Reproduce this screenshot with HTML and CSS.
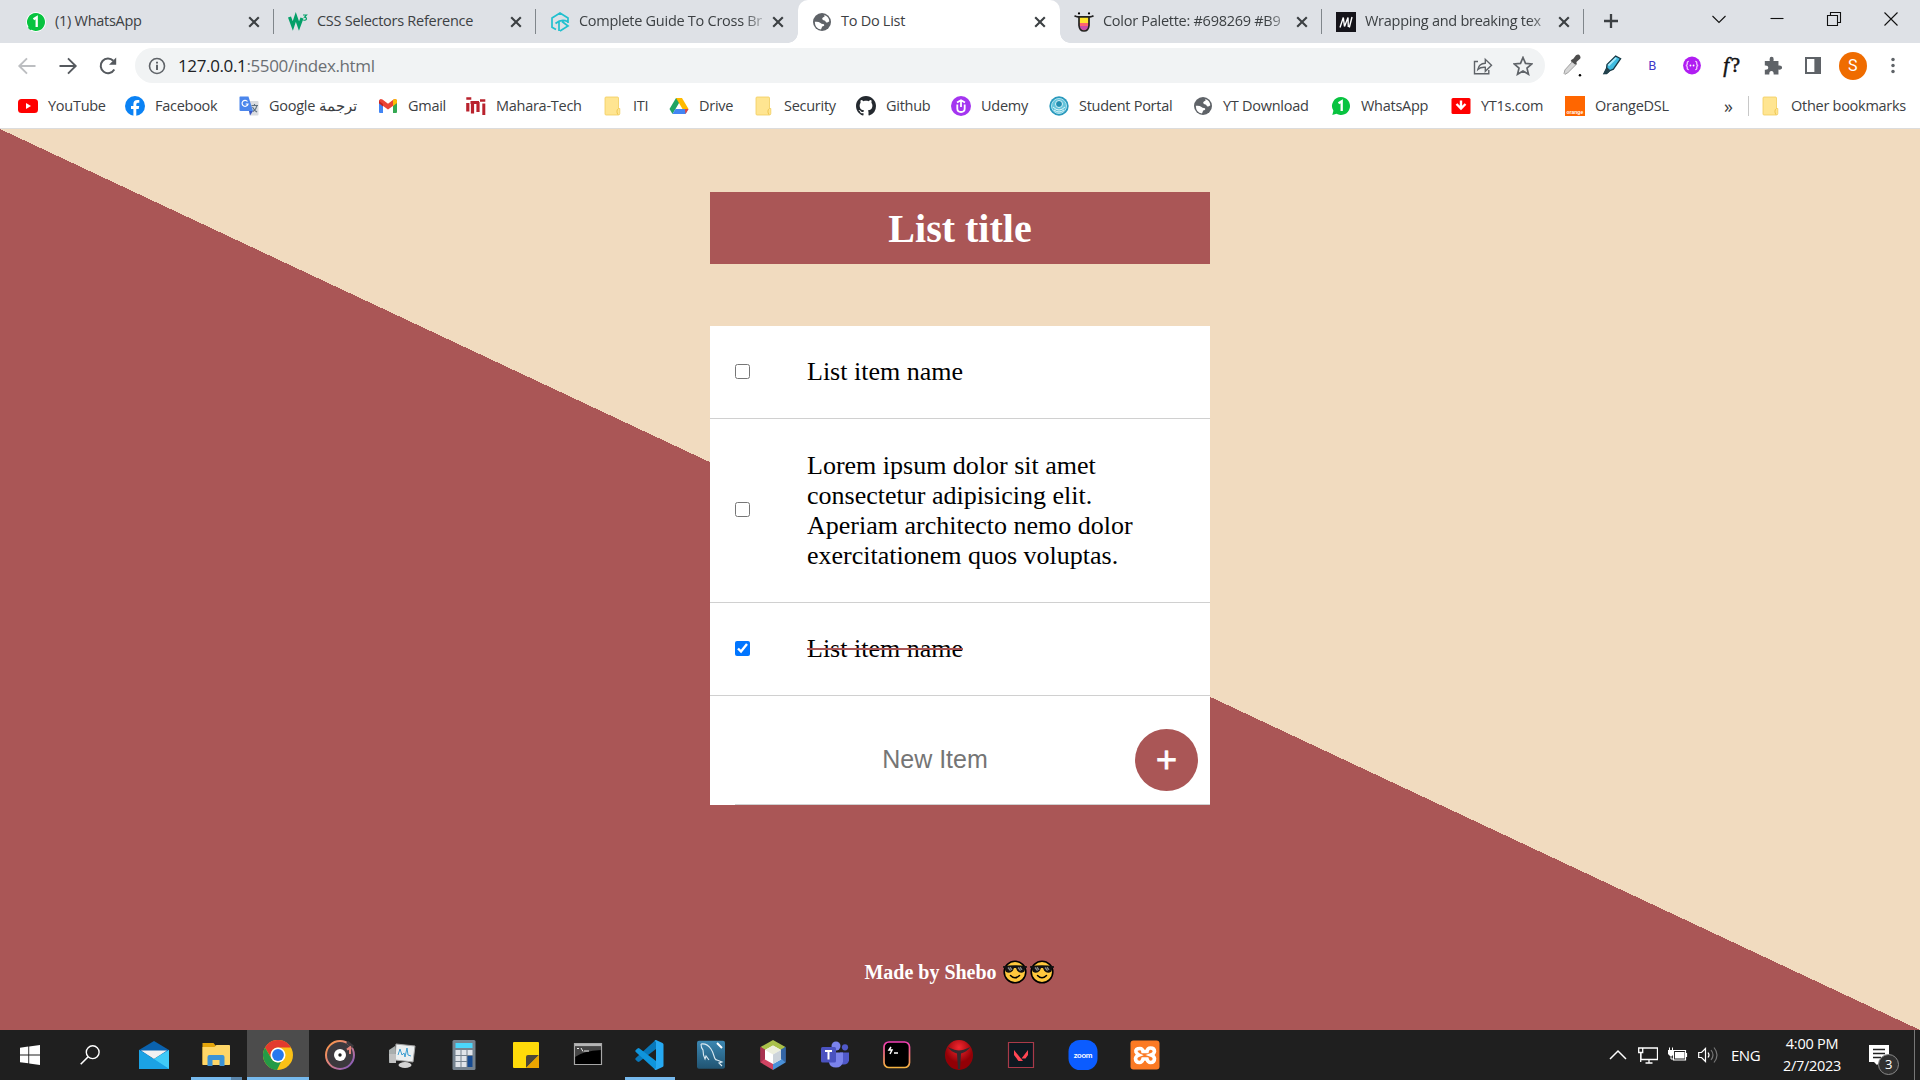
FILE: index.html
```html
<!DOCTYPE html>
<html lang="en">
<head>
<meta charset="utf-8">
<title>To Do List</title>
<link rel="stylesheet" href="styles.css">
</head>
<body>
<svg class="defs" width="0" height="0">
  <defs>
    <symbol id="x" viewBox="0 0 12 12"><path d="M1.2 1.2l9.6 9.6M10.8 1.2l-9.6 9.6" stroke="#3c4043" stroke-width="2.1" fill="none"/></symbol>
    <symbol id="globe" viewBox="0 0 20 20"><circle cx="10" cy="10" r="9" fill="#5f6368"/><path d="M2.800 9.800q3.500-.6 5.700 1.200 1 1.200 3 1 1.500.8.300 2l-1.600.4-1.200 3.200Q3 17 2.800 9.800z" fill="#fff"/><path d="M12.300 3q4.500 1.500 5 6.300-1.300 1.700-3.300.9-.6-1.800-2.500-1.900-1.500-.3-1.300-2 1-1.300 2.300-1.500z" fill="#fff"/></symbol>
    <symbol id="wa" viewBox="0 0 20 20"><path d="M10 1a9 9 0 1 1-4.500 16.800L1.300 19l1.100-4.200A9 9 0 0 1 10 1z" fill="#08c340"/><path d="M7.500 7.200l3.200-2V15" stroke="#fff" stroke-width="2.300" fill="none"/></symbol>
    <symbol id="folder" viewBox="0 0 20 20"><path d="M3 1h11.500a1 1 0 0 1 1 1v10.500h1.300v5a1.500 1.500 0 0 1-1.500 1.500H3a1 1 0 0 1-1-1V2a1 1 0 0 1 1-1z" fill="#ffe591" stroke="#f1cd5d" stroke-width=".8"/><path d="M15.500 12.500c-2 1-2 4-.5 6.200" fill="none" stroke="#efc650"/></symbol>
    <symbol id="cool" viewBox="0 0 24 24"><circle cx="12" cy="12" r="10.800" fill="#ffc83d" stroke="#000" stroke-width="1.600"/><path d="M0 6.200q12-2 24 0v1.500h-1.500l-1.300 4q-4 2.300-7-1l-1.200-2.700h-2l-1.200 2.700q-3 3.300-7 1l-1.300-4H0z" fill="#111"/><path d="M5 7.500l2.500 3.200M7 7.200l2 2.700M15 7.500l2.500 3.200M17 7.200l2 2.700" stroke="#8b8b8b" stroke-width="1.300"/><path d="M7.500 15.500q4.500 4.500 9 0" fill="none" stroke="#000" stroke-width="1.500" stroke-linecap="round"/></symbol>
  </defs>
</svg>

<header class="browser">
  <div class="tabstrip">
    <div class="tab"><svg class="fav halo"><use href="#wa"/></svg><span class="tab-title">(1) WhatsApp</span><svg class="close"><use href="#x"/></svg></div>
    <div class="tab"><svg class="fav" viewBox="0 0 20 20"><path d="M1.500 5l3.300 9 3-9 3.200 9 3-8" fill="none" stroke="#04a069" stroke-width="3.200"/><path d="M15 3h3.500l-2 2.200q2.500.3 1.800 2.200-.8 1.300-3 .6" fill="none" stroke="#04a069" stroke-width="1.200"/></svg><span class="tab-title">CSS Selectors Reference</span><svg class="close"><use href="#x"/></svg></div>
    <div class="tab no-sep"><svg class="fav" viewBox="0 0 20 20"><path d="M6 17.500l-4-2.300V6L10 1l8 5v5M10 19l8-5-6-4.500M5.500 11.500q6-5 12-2M9 9v10" fill="none" stroke="#22c0cf" stroke-width="1.700"/></svg><span class="tab-title fade">Complete Guide To Cross Br</span><svg class="close"><use href="#x"/></svg></div>
    <div class="tab active"><svg class="fav"><use href="#globe"/></svg><span class="tab-title">To Do List</span><svg class="close"><use href="#x"/></svg></div>
    <div class="tab"><svg class="fav" viewBox="0 0 20 20"><path d="M5 5h10v9q-1 5-5 5t-5-5z" fill="#ffe52d"/><path d="M5 11h10v3H5z" fill="#ff646e"/><path d="M5.300 14h9.400q-1 4.500-4.700 4.500T5.300 14z" fill="#c94fa8"/><path d="M.5 3.800q2 1.200 4 1h11q2 .2 4-1M5 5v8.500q.5 5.500 5 5.500t5-5.500V5" fill="none" stroke="#222" stroke-width="1.700"/><circle cx="5" cy="1.400" r="1.100"/><circle cx="15" cy="1.400" r="1.100"/></svg><span class="tab-title fade">Color Palette: #698269 #B9</span><svg class="close"><use href="#x"/></svg></div>
    <div class="tab"><svg class="fav" viewBox="0 0 20 20"><path d="M0 0h20v20H0z" fill="#15141a"/><path d="M4 15.500L7.300 5.500 8.500 14.500 12 5.500l.3 9.500M16 5l-2.700 10.500" fill="none" stroke="#fff" stroke-width="1.400"/></svg><span class="tab-title fade">Wrapping and breaking tex</span><svg class="close"><use href="#x"/></svg></div>
    <svg class="newtab" viewBox="0 0 16 16"><path d="M8 1v14M1 8h14" stroke="#3c4043" stroke-width="2.300"/></svg>
    <div class="wincontrols">
      <svg viewBox="0 0 16 16"><path d="M1.500 5L8 11.500 14.500 5"/></svg>
      <svg viewBox="0 0 16 16"><path d="M1.500 7.500h13"/></svg>
      <svg viewBox="0 0 16 16"><path d="M1.500 4.500h10v10h-10zM4.500 4.500v-3h10v10h-3"/></svg>
      <svg viewBox="0 0 16 16"><path d="M1.500 1.500l13 13M14.500 1.500l-13 13"/></svg>
    </div>
  </div>

  <div class="toolbar">
    <div class="nav">
      <svg viewBox="0 0 20 20"><path d="M18.500 10H2.500M10 2.300L2.300 10l7.700 7.700" fill="none" stroke="#bcbec1" stroke-width="1.900"/></svg>
      <svg viewBox="0 0 20 20"><path d="M1.500 10h16M10 2.300l7.700 7.700-7.700 7.700" fill="none" stroke="#55595e" stroke-width="1.900"/></svg>
      <svg viewBox="0 0 20 20"><path d="M16.300 13.500a7.300 7.300 0 1 1-1-8.700" fill="none" stroke="#55595e" stroke-width="2"/><path d="M18.200 1.500v7.300H11z" fill="#55595e"/></svg>
    </div>
    <div class="omnibox">
      <svg class="info" viewBox="0 0 18 18"><circle cx="9" cy="9" r="7.500" fill="none" stroke="#5f6368" stroke-width="1.600"/><path d="M9 7.800V13M9 4.700v1.900" stroke="#5f6368" stroke-width="2"/></svg>
      <span class="url"><b>127.0.0.1</b>:5500/index.html</span>
      <svg class="obtn" viewBox="0 0 20 20"><path d="M5 5.500H1.500v12.300H15.800V14M4.800 13.500q1-6 7.500-6.300V3.300l6.200 6-6.200 6v-4q-5-.3-7.500 2.200z" fill="none" stroke="#5f6368" stroke-width="1.400"/></svg>
      <svg class="obtn" viewBox="0 0 20 20"><path d="M10 1.500l2.500 5.900 6.400.5-4.900 4.200 1.500 6.200L10 15l-5.500 3.300L6 12.100 1.100 7.900l6.400-.5z" fill="none" stroke="#5f6368" stroke-width="1.700"/></svg>
    </div>
    <div class="extensions">
      <svg viewBox="0 0 22 26"><path d="M2 22l1-4L12 8l4 3.500-9.500 9.500-3.500 2z" fill="#d6d6d6" stroke="#969696"/><path d="M10.500 6.500l2-1 3-4q3-2 4.500.5t-.500 4l-3.500 3 .3 2.500-1.800.5-5-4z" fill="#4d4d4d"/><circle cx="20" cy="24" r="1.400"/></svg>
      <svg viewBox="0 0 22 24"><path d="M2 21l3-6 .5-4L15 1.500l5.500 3L12.500 16 8 18l-3 3z" fill="#3fbbe0" stroke="#173744" stroke-width="1.400"/><path d="M7 12L15.500 3.500" stroke="#a9e9fa" stroke-width="2"/><path d="M1.500 21.500L5.500 14l4 3.500-3 3z" fill="#24434d"/></svg>
      <span class="ext-b">B</span>
      <svg viewBox="0 0 22 22"><circle cx="11" cy="11" r="9.800" fill="#b01df2"/><path d="M7.500 6.500q-2 0-1.700 2.300.2 2-1.600 2.200 1.800.2 1.600 2.200-.3 2.300 1.700 2.300M14.500 6.500q2 0 1.700 2.300-.2 2 1.600 2.200-1.800.2-1.600 2.200.3 2.300-1.700 2.300" stroke="#f1c4ff" stroke-width="1.500" fill="none"/><circle cx="9.300" cy="11" r="1" fill="#fff"/><circle cx="12.700" cy="11" r="1" fill="#fff"/></svg>
      <span class="ext-f"><i>f</i>?</span>
      <svg viewBox="0 0 22 22"><path d="M2 6h5.500q-1-4.500 2-4.500T11.500 6H17v5q4-.5 4 2.200t-4 2.300V21h-5.300q.3-4-2.400-4T7 21H2v-5.300q3.800.3 3.800-2.400T2 11z" fill="#5f6368"/></svg>
      <svg viewBox="0 0 22 22"><path d="M3.300 2.800h15.400v16.400H3.300z" fill="#fff" stroke="#5f6368" stroke-width="2.200"/><path d="M12.500 2h7v18h-7z" fill="#5f6368"/></svg>
      <span class="avatar">S</span>
      <svg viewBox="0 0 22 22"><g fill="#5f6368"><circle cx="11" cy="4.300" r="1.900"/><circle cx="11" cy="11" r="1.900"/><circle cx="11" cy="17.700" r="1.900"/></g></svg>
    </div>
  </div>

  <nav class="bookmarks">
    <a class="bm"><svg viewBox="0 0 20 20"><rect y="3" width="20" height="14" rx="3.500" fill="#f00"/><path d="M8 7l5 3-5 3z" fill="#fff"/></svg>YouTube</a>
    <a class="bm"><svg viewBox="0 0 20 20"><circle cx="10" cy="10" r="10" fill="#0b82f4"/><path d="M8.400 20v-7H6v-3h2.400V8q0-4 4-4h1.900v2.700h-1.500q-1.500 0-1.500 1.600V10h2.900l-.5 3h-2.400v7z" fill="#fff"/></svg>Facebook</a>
    <a class="bm"><svg viewBox="0 0 20 20"><path d="M8 5h10.500q1 0 1 1v12.500q0 1-1 1H11z" fill="#dadce0"/><path d="M1 .5h8.500L14 15H1.500q-1 0-1-1V1z" fill="#4b86ec"/><path d="M10 15h4l-3 4.500z" fill="#3755c4"/><path d="M8.500 5.500a3 3 0 1 0 .5 2.500H6.700" fill="none" stroke="#fff" stroke-width="1.200"/><path d="M12.500 9.500H19M15.500 8v1.500M18 9.500q-1 4-4 6M13.500 11q1.500 3 4.500 5" stroke="#5f7180" stroke-width="1.100" fill="none"/></svg>Google ترجمة</a>
    <a class="bm"><svg viewBox="0 0 20 20"><path d="M1 4.500h4V17H2q-1 0-1-1z" fill="#4285f4"/><path d="M15 4.500h4V16q0 1-1 1h-3z" fill="#34a853"/><path d="M1 4.500q1-2.500 3.500-1L10 7.700l5.500-4.200q2.500-1.500 3.500 1V7l-9 6.500L1 7z" fill="#ea4335"/><path d="M15 4q3-2 4 .5V7l-4 3z" fill="#fbbc04"/><path d="M1 5l4 3v2.500L1 7.300z" fill="#c5221f"/></svg>Gmail</a>
    <a class="bm"><svg viewBox="0 0 20 20"><path d="M1.800 7v8.500M6.500 17.500V5.500M4.500 6.500H13M12 6v10" stroke="#b9222d" stroke-width="3.200" fill="none"/><path d="M17.800 7.500V19" stroke="#b9222d" stroke-width="3"/><path d="M.3 2.500h5M14 4.500h5.300" stroke="#b9222d" stroke-width="2.600"/></svg>Mahara-Tech</a>
    <a class="bm"><svg><use href="#folder"/></svg>ITI</a>
    <a class="bm"><svg viewBox="0 0 20 20"><path d="M7 2h6l-6.500 11-3 5L.500 13z" fill="#1fa463"/><path d="M7 2h6l6.500 11h-6z" fill="#ffba00"/><path d="M6.500 13h13l-3 5h-13z" fill="#4285f4"/><path d="M16 13h3.500l-3 5z" fill="#ea4335"/></svg>Drive</a>
    <a class="bm"><svg><use href="#folder"/></svg>Security</a>
    <a class="bm"><svg viewBox="0 0 16 16"><path fill="#24292f" d="M8 0C3.580 0 0 3.580 0 8c0 3.540 2.290 6.530 5.470 7.590.4.070.55-.17.55-.38 0-.19-.01-.82-.01-1.490-2.010.37-2.530-.49-2.690-.94-.09-.23-.48-.94-.82-1.130-.28-.15-.68-.52-.01-.53.630-.01 1.080.58 1.230.82.720 1.210 1.870.87 2.330.66.070-.52.280-.87.510-1.070-1.780-.2-3.640-.89-3.640-3.950 0-.87.310-1.590.82-2.150-.08-.2-.36-1.020.08-2.120 0 0 .67-.21 2.200.82.640-.18 1.320-.27 2-.27s1.360.09 2 .27c1.530-1.040 2.200-.82 2.200-.82.440 1.100.160 1.920.080 2.120.510.560.820 1.270.820 2.150 0 3.070-1.870 3.750-3.650 3.950.290.250.540.730.540 1.480 0 1.070-.01 1.930-.01 2.200 0 .21.150.46.550.38A8.010 8.010 0 0 0 16 8c0-4.420-3.580-8-8-8z"/></svg>Github</a>
    <a class="bm"><svg viewBox="0 0 20 20"><circle cx="10" cy="10" r="10" fill="#a435f0"/><path d="M6.300 8.500v4q0 3.500 3.700 3.500t3.700-3.500v-4M6 6.500l4-2.300 4 2.300M10 4v7" stroke="#fff" stroke-width="1.800" fill="none"/></svg>Udemy</a>
    <a class="bm"><svg viewBox="0 0 20 20"><circle cx="10" cy="10" r="9.700" fill="#2999bd"/><circle cx="10" cy="10" r="7.500" fill="#64c5dc" stroke="#b2e3ef"/><circle cx="10" cy="8" r="3.500" fill="#238eb0" stroke="#d9f4fa"/><path d="M4 11q6 6 12 0M5 14q5 4 10 0" stroke="#e0f6fa" fill="none"/></svg>Student Portal</a>
    <a class="bm"><svg><use href="#globe"/></svg>YT Download</a>
    <a class="bm"><svg><use href="#wa"/></svg>WhatsApp</a>
    <a class="bm"><svg viewBox="0 0 20 20"><rect x=".5" y="2" width="19" height="16" rx="1.500" fill="#f00"/><path d="M10 4.500v7M5.500 8l4.500 4.500L14.500 8" fill="none" stroke="#fff" stroke-width="2.400"/></svg>YT1s.com</a>
    <a class="bm"><svg viewBox="0 0 20 20"><path d="M0 0h20v20H0z" fill="#ff6600"/><text class="orange" x="1.500" y="17.500">orange</text></svg>OrangeDSL</a>
    <span class="more">»</span>
    <a class="bm other"><svg><use href="#folder"/></svg>Other bookmarks</a>
  </nav>
</header>

<main class="page">
  <h1 class="title">List title</h1>
  <section class="card">
    <label class="item"><input type="checkbox"><span>List item name</span></label>
    <label class="item long"><input type="checkbox"><span>Lorem ipsum dolor sit amet consectetur adipisicing elit. Aperiam architecto nemo dolor exercitationem quos voluptas.</span></label>
    <label class="item"><input type="checkbox" checked><span>List item name</span></label>
    <form class="new-item"><input type="text" placeholder="New Item"><button type="button">+</button></form>
  </section>
  <footer class="credit"><span>Made by Shebo</span><svg><use href="#cool"/></svg><svg><use href="#cool"/></svg></footer>
</main>

<footer class="taskbar">
  <div class="apps">
    <div class="app"><svg class="small" viewBox="0 0 20 20"><path d="M0 2.800l8.300-1.200v7.900H0zM9.200 1.500L20 0v9.500H9.200zM0 10.400h8.300v7.900L0 17.200zM9.200 10.400H20V20L9.200 18.500z" fill="#fff"/></svg></div>
    <div class="app find"><svg class="small" viewBox="0 0 20 20"><circle cx="12.700" cy="7.200" r="6.400" fill="none" stroke="#fff" stroke-width="1.400"/><path d="M8.200 11.800L.7 19.300" stroke="#fff" stroke-width="1.600"/></svg></div>
    <div class="app"><svg viewBox="0 0 30 30"><path d="M0 10L15 1l15 9v6H0z" fill="#0a62ae"/><path d="M0 10l15 9 15-9v19H0z" fill="#1aa6e8"/><path d="M2 10.500h26l-13 8.500z" fill="#f2f2f2"/><path d="M15 19l15-9v19z" fill="#40cbf8"/><path d="M0 10l30 19H0z" fill="#1ba2e4"/></svg></div>
    <div class="app run stacked"><svg viewBox="0 0 30 30"><path d="M1.500 3h11l2 2.500h14V25h-27z" fill="#e5a50a"/><path d="M1.500 7h12l2-2H28q1 0 1 1v18q0 1-1 1H2.500q-1 0-1-1z" fill="#ffd667"/><path d="M6.500 26V17q0-2 2-2h13q2 0 2 2v9h-5v-6h-7v6z" fill="#3c93d6"/></svg></div>
    <div class="app run current"><svg viewBox="0 0 30 30"><circle cx="15" cy="15" r="15" fill="#fbc116"/><path d="M2 7.500A15 15 0 0 1 28 7.500H15a7.500 7.500 0 0 0-6.800 10.500z" fill="#e33b2e"/><path d="M2 7.500l6.500 11.200a7.500 7.500 0 0 0 9.500 3.100L14 30A15 15 0 0 1 2 7.500z" fill="#249a46"/><circle cx="15" cy="15" r="7.500" fill="#fff"/><circle cx="15" cy="15" r="5.900" fill="#2778ed"/></svg></div>
    <div class="app"><svg viewBox="0 0 30 30"><defs><linearGradient id="groove" x2="1" y2="1"><stop stop-color="#ff9a40"/><stop offset=".45" stop-color="#df827e"/><stop offset="1" stop-color="#7554c7"/></linearGradient></defs><circle cx="15" cy="15" r="14" fill="#3c393e" stroke="url(#groove)" stroke-width="2"/><path d="M22 2l6 5" stroke="#3c393e" stroke-width="3"/><circle cx="15" cy="15" r="6" fill="#fff"/><circle cx="15" cy="15" r="1.700" fill="#222"/><path d="M25 14V8l-3 1.500 4-3" fill="none" stroke="#e2847a" stroke-width="2"/></svg></div>
    <div class="app"><svg viewBox="0 0 30 30"><path d="M2 10l6-4v16l-6 1z" fill="#a9aeae"/><path d="M9 4l19 2-2 16-18-2z" fill="#eceff0" stroke="#a3a3a3"/><path d="M11 15l2-6 2 6 2-2 1 4 2-9 1 7 3 1" fill="none" stroke="#3c9ed2"/><ellipse cx="18" cy="25" rx="6.500" ry="3" fill="#d4d4d4"/><path d="M2 14h7v9H3z" fill="#c1c1c1"/></svg></div>
    <div class="app"><svg viewBox="0 0 30 30"><rect x="3.500" width="23" height="30" rx="1.500" fill="#76838f"/><path d="M6.500 3h17v5h-17z" fill="#4bd6fb"/><path d="M6.500 10h5v5h-5zM12.500 10h5v5h-5zM18.500 10h5v5h-5zM6.500 16h5v5h-5zM12.500 16h5v5h-5zM6.500 22h5v5h-5zM12.500 22h5v5h-5z" fill="#e1e5ea"/><path d="M18.500 16h5v11h-5z" fill="#164b92"/></svg></div>
    <div class="app"><svg viewBox="0 0 30 30"><rect x="2" y="2" width="26" height="26" rx="1" fill="#ffdb0a"/><path d="M15 28V17q0-2 2-2h11z" fill="#4c4638"/><path d="M15 28l13-13v13z" fill="#eaa400"/></svg></div>
    <div class="app"><svg viewBox="0 0 30 30"><path d="M1.500 3.500h27v21h-27z" fill="#000" stroke="#a7a7a7" stroke-width="1.200"/><path d="M2 4h26v2.500H2z" fill="#b6b6b6"/><path d="M2 6.500h26V10Q10 11 2 17z" fill="#454545"/><path d="M4 8.500h2M8 8l2 3.500M11 11h5" stroke="#eee"/></svg></div>
    <div class="app run"><svg viewBox="0 0 30 30"><path d="M21 0v9L4.500 21.500q-1 .8-2 0L.8 20q-1-1 0-2L20 .5z" fill="#0877b9"/><path d="M21 30v-9L4.500 8.500q-1-.8-2 0L.8 10q-1 1 0 2L20 29.500z" fill="#0f95dc"/><path d="M21 0l6.500 3q1 .6 1 1.500v21q0 1-1 1.500L21 30q-1 0-1.500-.8L21 28V2L19.500.8z" fill="#26a9f2"/></svg></div>
    <div class="app"><svg viewBox="0 0 30 30"><defs><linearGradient id="sea" x2="0" y2="1"><stop stop-color="#3b86b1"/><stop offset="1" stop-color="#215472"/></linearGradient></defs><rect x="1" y=".8" width="28" height="28" rx="2" fill="url(#sea)"/><path d="M5 4q6-1 10 5 2 3 3 7t3 4l5 2-3 1 3 3M5 4q0 4 2 6 0 5 2 9l1-3 3 4" fill="none" stroke="#dceaf2" stroke-width="1.100"/><path d="M21 3l5 5" stroke="#fff" stroke-width="2"/></svg></div>
    <div class="app"><svg viewBox="0 0 30 30"><path d="M15 0l12.500 7L15 15 2.500 7z" fill="#a9c04a"/><path d="M2.500 7L15 15v15L2.500 22.500z" fill="#d04463"/><path d="M2.500 7l5 3v8l-5 4.500z" fill="#a83250"/><path d="M27.500 7L15 15v15l12.500-7.500z" fill="#4a90d8"/><path d="M27.500 7l-5 3v8l5 4.500z" fill="#3465a5"/><path d="M15 5.500l8 4.500v9.500L15 24l-8-4.500V10z" fill="#fff"/><path d="M7 10l8-4.500 8 4.500-8 4.500z" fill="#eceedd"/><path d="M15 14.500l8-4.500v9.500L15 24z" fill="#ccd3da"/></svg></div>
    <div class="app"><svg viewBox="0 0 30 30"><circle cx="16" cy="6" r="4.500" fill="#7b83eb"/><circle cx="25" cy="7.300" r="3.100" fill="#5059c9"/><path d="M20 12.500h9v8q-1 4-5 4h-4z" fill="#5059c9"/><path d="M9 12.500h14v9q-1 6-7 6t-7-5z" fill="#7b83eb"/><rect x="1" y="7" width="15" height="15.500" rx="1.500" fill="#4a52c0"/><path d="M5 11h7M8.500 11v8.500" stroke="#fff" stroke-width="2"/></svg></div>
    <div class="app"><svg viewBox="0 0 30 30"><defs><linearGradient id="term" x2="0" y2="1"><stop stop-color="#f23cb5"/><stop offset="1" stop-color="#f5b340"/></linearGradient></defs><rect x="2" y="2" width="25.500" height="25.500" rx="5" fill="#000" stroke="url(#term)" stroke-width="1.700"/><path d="M9 7l-2 3h3l-2 4M12 13h4" fill="none" stroke="#fff" stroke-width="1.500"/></svg></div>
    <div class="app"><svg viewBox="0 0 30 30"><defs><radialGradient id="ruby" cy=".25"><stop stop-color="#f22830"/><stop offset="1" stop-color="#920006"/></radialGradient></defs><ellipse cx="15" cy="15" rx="14" ry="15" fill="url(#ruby)"/><path d="M3.500 7q8 3.500 11.500 3.500T26.500 7q-4 5-9.500 6.500L16 29h-2l-1-15.500Q7.500 12 3.500 7z" fill="#332b2f"/></svg></div>
    <div class="app"><svg viewBox="0 0 30 30"><path d="M2.500 2.500h25v25h-25z" fill="#0e1820" stroke="#a83a49" stroke-width="1.200"/><path d="M8 10v5l4.500 6H17zM22 10v5l-2.500 3.500h-4z" fill="#ff4654"/></svg></div>
    <div class="app"><svg viewBox="0 0 30 30"><rect x=".5" width="29" height="30" rx="11.500" fill="#0b5cff"/><text class="zoomtxt" x="15" y="17.700">zoom</text></svg></div>
    <div class="app"><svg viewBox="0 0 30 30"><rect x=".5" y=".5" width="29" height="29" rx="3" fill="#fb7a24"/><path d="M10 8.500q-5 0-4 3.500 1 2 3 3-3 1-3.500 3.500 0 4 4 4 2.500 0 3.500-3.500h4q1 3.500 3.500 3.500 4 0 4-4-.5-2.500-3.500-3.500 3-1 3.500-3.500 0-3.500-4-3.500-3 0-3.500 3.500h-4q-.5-3-3-3z" fill="none" stroke="#fff" stroke-width="3.600"/></svg></div>
  </div>
  <div class="tray">
    <svg class="tr" viewBox="0 0 20 20"><path d="M2 14l8-8 8 8" fill="none" stroke="#fff" stroke-width="1.500"/></svg>
    <svg class="tr" viewBox="0 0 20 20"><path d="M5 3h14.500v11.500H3V8M11 14.500V18M7.500 18h7M.7 3h4v4.500h-4zM2.700 8v9" fill="none" stroke="#fff" stroke-width="1.300"/></svg>
    <svg class="tr" viewBox="0 0 20 20"><path d="M5.500 5.500h12v9.500H5.500zM18.500 8v4" fill="none" stroke="#fff" stroke-width="1.200"/><path d="M7 7h9.500v6.500H7zM0 5h6v4L4 11H2L0 9z" fill="#fff"/><path d="M1.500 2.500V5M4.500 2.500V5M3 10v4h3" stroke="#fff" fill="none"/></svg>
    <svg class="tr" viewBox="0 0 20 20"><path d="M.7 7.500h2.800l4-4v13l-4-4H.7z" fill="none" stroke="#fff" stroke-width="1.200"/><path d="M10 7.500q2 2.500 0 5" fill="none" stroke="#fff" stroke-width="1.200"/><path d="M13 5q4 5 0 10M16 2.500q6 7.500 0 15" fill="none" stroke="#777" stroke-width="1.200"/></svg>
    <span class="lang">ENG</span>
    <div class="clock"><span>4:00 PM</span><span>2/7/2023</span></div>
    <div class="notes"><svg viewBox="0 0 20 20"><path d="M0 0h20v17H11l-3 3-3-3H0z" fill="#fff"/><path d="M4 4.500h12M4 8.500h12M4 12.500h8" stroke="#222" stroke-width="1.400"/></svg><span class="badge">3</span></div>
    <div class="desktop-edge"></div>
  </div>
</footer>
</body>
</html>
```
FILE: styles.css
```css
* { box-sizing: border-box; }
body {
  margin: 0;
  width: 1920px;
  height: 1080px;
  overflow: hidden;
  display: flex;
  flex-direction: column;
  font-family: "Open Sans", "Noto Sans", sans-serif;
  font-size: 14.5px;
  letter-spacing: -0.27px;
  color: #3c4043;
}
.defs { position: absolute; }
svg { display: block; flex: none; }

/* browser window */
.browser { height: 129px; background: #fff; border-bottom: 1px solid #dcdcdc; }
.tabstrip { display: flex; height: 43px; padding-left: 12px; background: #dee1e6; }
.tab {
  display: flex;
  align-items: center;
  flex: none;
  width: 262px;
  padding: 0 14px;
  position: relative;
}
.fav { width: 20px; height: 20px; margin-right: 9px; }
.halo { border-radius: 50%; background: #fff; }
.tab-title { flex: 1; white-space: nowrap; line-height: 24px; padding-bottom: 2px; }
.tab-title.fade {
  -webkit-mask-image: linear-gradient(to right, #000 88%, transparent 103%);
  mask-image: linear-gradient(to right, #000 88%, transparent 103%);
}
.close { width: 12px; height: 12px; margin-left: 7px; }
.tab::after {
  content: "";
  position: absolute;
  right: 0;
  top: 9px;
  width: 1px;
  height: 25px;
  background: #80868b;
}
.tab.no-sep::after { display: none; }
.tab.active { background: #fff; border-radius: 10px 10px 0 0; }
.tab.active::before,
.tab.active::after {
  content: "";
  position: absolute;
  top: auto;
  bottom: 0;
  width: 10px;
  height: 10px;
}
.tab.active::before { left: -10px; background: radial-gradient(circle at 0 0, transparent 9.500px, #fff 10px); }
.tab.active::after { right: -10px; background: radial-gradient(circle at 100% 0, transparent 9.500px, #fff 10px); }
.newtab { width: 16px; height: 16px; margin: 13px 0 0 19px; }
.wincontrols { display: flex; margin-left: auto; }
.wincontrols svg { width: 16px; height: 16px; margin: 11px 20.700px 0; fill: none; stroke: #111; stroke-width: 1.100; }

.toolbar { display: flex; align-items: center; height: 45px; }
.nav { display: flex; gap: 20.500px; width: 135px; padding-left: 17px; }
.nav svg { width: 20px; height: 20px; }
.omnibox {
  display: flex;
  align-items: center;
  width: 1410px;
  height: 35px;
  border-radius: 18px;
  background: #f1f3f4;
  padding: 0 12px 0 13px;
}
.info { width: 18px; height: 18px; margin-right: 12px; }
.url { flex: 1; font-size: 17px; letter-spacing: -0.370px; color: #6b6f73; }
.url b { font-weight: 400; color: #202124; }
.obtn { width: 20px; height: 20px; margin-left: 20px; }
.extensions { display: grid; grid-template-columns: repeat(9, 40.1px); place-items: center; margin-left: 7px; }
.extensions svg { width: 20px; height: 23px; }
.ext-b { font: 12px "DejaVu Sans", sans-serif; color: #4038c8; }
.ext-f { font: 21px "Liberation Serif", serif; color: #111; letter-spacing: 1.500px; -webkit-text-stroke: 0.5px #111; }
.avatar {
  width: 28px;
  height: 28px;
  border-radius: 50%;
  background: #ef6c00;
  color: #fff;
  text-align: center;
  font: 16px/28px Roboto, sans-serif;
}

.bookmarks {
  display: grid;
  grid-template-columns: 107px 114px 139px 88px 137px 66px 85px 102px 95px 98px 144px 138px 120px 114px 159px 24px 1fr;
  align-items: center;
  height: 35px;
  padding-left: 18px;
}
.bm { display: flex; align-items: center; white-space: nowrap; line-height: 20px; }
.bm svg { width: 20px; height: 20px; margin-right: 10px; }
.more { font-size: 18px; line-height: 20px; }
.other { height: 20px; border-left: 1px solid #c8c8c8; padding-left: 12px; }
.orange { font: bold 5px "Liberation Sans", sans-serif; fill: #fff; letter-spacing: 0; }

/* to-do page */
.page {
  flex: 1;
  display: flex;
  flex-direction: column;
  align-items: center;
  padding-top: 63px;
  background: linear-gradient(to top right, #aa5656 50%, #f1dbbf 50%);
  font-family: "Liberation Serif", "Times New Roman", serif;
  letter-spacing: 0;
}
.title {
  width: 500px;
  height: 72px;
  margin: 0 0 62px;
  background: #aa5656;
  color: #fff;
  text-align: center;
  font-size: 40px;
  line-height: 73px;
}
.card { width: 500px; background: #fff; color: #000; }
.item {
  display: flex;
  align-items: center;
  height: 93px;
  padding-left: 25px;
  border-bottom: 1px solid #d0d0d0;
  font-size: 26px;
  line-height: 30px;
}
.item.long { height: 184px; }
.item input { width: 15px; height: 15px; margin: 0 57px 2px 0; accent-color: #0075ff; flex: none; }
.item span { max-width: 345px; }
.item input:checked + span { text-decoration: line-through #aa5656 2px; }
.new-item {
  display: flex;
  align-items: center;
  height: 109px;
  margin-left: 25px;
  padding-top: 19px;
  border-bottom: 1px solid #d0d0d0;
}
.new-item input {
  width: 400px;
  height: 62px;
  border: 0;
  outline: 0;
  padding: 0;
  text-align: center;
  font: 25px "Liberation Sans", Arial, sans-serif;
}
.new-item input::placeholder { color: #757575; }
.new-item button {
  width: 63px;
  height: 62px;
  border: 0;
  border-radius: 50%;
  padding: 0;
  background: #aa5656;
  color: #fff;
  font: 36px/56px "Liberation Sans", Arial, sans-serif;
  -webkit-text-stroke: 0.8px #fff;
}
.credit { display: flex; align-items: center; height: 26px; margin-top: 154px; color: #fff; font-size: 20px; font-weight: 700; }
.credit span { margin: 1px 6px 0 1px; }
.credit svg { width: 24px; height: 24px; margin-right: 3px; }

/* taskbar */
.taskbar { display: flex; height: 50px; background: #1f1f1f; color: #fff; }
.apps { display: grid; grid-template-columns: 60px 63.500px repeat(17, 61.900px); }
.app { display: flex; align-items: center; justify-content: center; position: relative; }
.app.find { padding-right: 4px; }
.app svg { width: 30px; height: 30px; }
.app svg.small { width: 20px; height: 20px; }
.app.current { background: #4c4c4c; }
.app.run::after { content: ""; position: absolute; left: 6px; right: 6px; bottom: 0; height: 3px; background: #76b9ed; }
.app.current::after { left: 0; right: 0; }
.app.stacked::after { right: 5px; background: linear-gradient(to right, #76b9ed 40px, #5a85aa 40px); }
.zoomtxt { font: bold 8px Lato, sans-serif; fill: #fff; text-anchor: middle; }
.tray { display: flex; align-items: center; margin-left: auto; }
.tr { width: 20px; height: 20px; margin-right: 10px; }
.lang { width: 36px; font-size: 15px; padding-left: 3px; letter-spacing: -0.5px; white-space: nowrap; }
.clock { display: flex; flex-direction: column; width: 96px; align-items: center; line-height: 22px; }
.notes { position: relative; width: 46px; padding-left: 9px; }
.notes svg { width: 20px; height: 20px; }
.badge {
  position: absolute;
  left: 18px;
  top: 9px;
  width: 21px;
  height: 21px;
  border: 1px solid #8a8a8a;
  border-radius: 50%;
  background: #303030;
  text-align: center;
  font-size: 13px;
  line-height: 19px;
}
.desktop-edge { width: 6px; height: 50px; margin-left: 8px; border-left: 1px solid #777; }
```
